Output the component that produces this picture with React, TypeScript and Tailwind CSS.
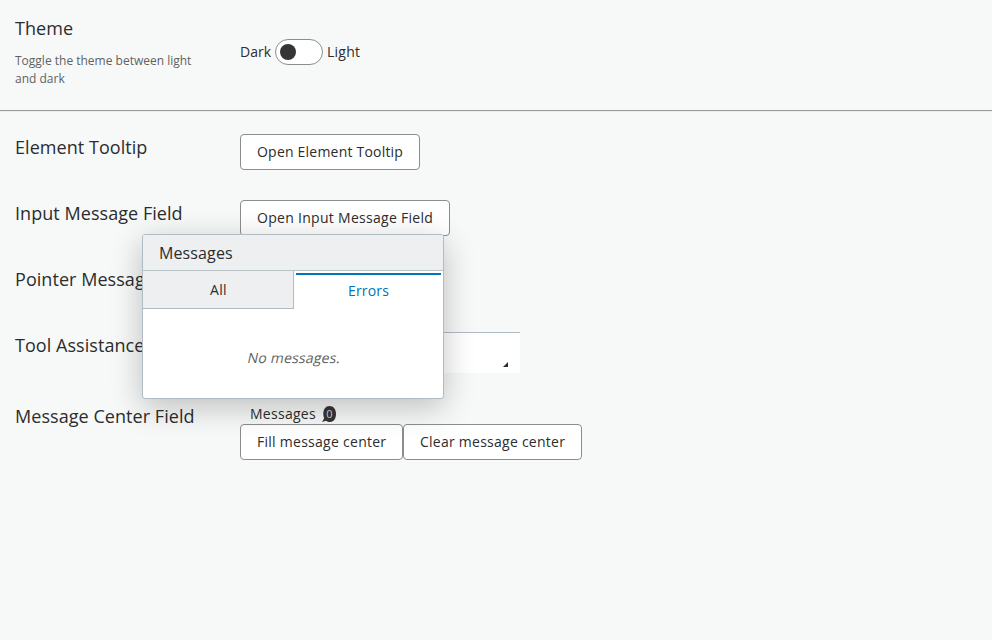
import type { ReactNode } from "react";

function Row({ title, description, children }: { title: string; description?: string; children?: ReactNode }) {
  return (
    <section className="flex p-[15px]">
      <div className="w-[225px] shrink-0 pr-[30px]">
        <h2 className="text-lg leading-[27px] tracking-[0.05px] whitespace-nowrap">{title}</h2>
        {description && <p className="mt-2.5 text-xs leading-[18px] text-[#606262]">{description}</p>}
      </div>
      {children}
    </section>
  );
}

function Button({ className, children }: { className: string; children: ReactNode }) {
  return (
    <button
      className={`flex h-9 justify-start rounded border border-[#8b8d8e] bg-white pt-1.5 pl-4 text-sm leading-[21px] whitespace-nowrap ${className}`}
    >
      {children}
    </button>
  );
}

function MessagesPopup() {
  return (
    <div className="absolute top-[234px] left-[142px] h-[165px] w-[302px] rounded-[3px] border border-[#b1bbc2] bg-white shadow-[0_8px_32px_rgba(0,0,0,0.24)]">
      <div className="h-9 rounded-t-[2px] border-b border-[#b9c3c8] bg-[#eeeff1] pl-4 text-base leading-9 tracking-[0.12px]">
        Messages
      </div>
      <div className="flex h-[38px] text-sm">
        <button className="w-[151px] border-r border-b border-[#b1bbc2] bg-[#eeeff1] pl-px tracking-[0.3px]">All</button>
        <div className="flex-1 px-0.5 pt-0.5">
          <div className="h-0.5 bg-[#0073ba]" />
          <button className="flex h-[34px] w-full justify-center pt-[5px] leading-[21px] tracking-[0.15px] text-[#0073ba]">
            Errors
          </button>
        </div>
      </div>
      <p className="mt-[38px] pl-0.5 text-center text-sm leading-[21px] text-[#606262]">
        <span className="inline-block -skew-x-12 tracking-[0.2px]">No messages.</span>
      </p>
    </div>
  );
}

export default function App() {
  return (
    <main className="relative h-[640px] overflow-hidden bg-[#f7f9f8] font-['Open_Sans',sans-serif] text-[#2b2d2e]">
      <Row title="Theme" description="Toggle the theme between light and dark">
        <div className="flex h-[73px] items-center gap-1 text-sm">
          <span>Dark</span>
          <span className="flex h-[26px] w-12 items-center rounded-full border border-[#8b8d8e] bg-white px-1">
            <span className="size-4 rounded-full bg-[#353535]" />
          </span>
          <span className="tracking-[0.25px]">Light</span>
        </div>
      </Row>
      <hr className="my-[7px] h-0.5 border-t border-b border-t-[#9a9c9c] border-b-[#eeeeee]" />
      <Row title="Element Tooltip">
        <Button className="w-[180px] tracking-[0.21px]">Open Element Tooltip</Button>
      </Row>
      <Row title="Input Message Field">
        <Button className="w-[210px] tracking-[0.29px]">Open Input Message Field</Button>
      </Row>
      <Row title="Pointer Message">
        <Button className="w-[180px] tracking-[0.2px]">Open Pointer Message</Button>
      </Row>
      <Row title="Tool Assistance">
        <div className="flex h-[41px] w-[280px] items-end justify-end border-t border-[#b1bbc2] bg-white pr-3 pb-1.5">
          <svg className="size-[5px]" viewBox="0 0 5 5" fill="#2b2d2e">
            <path d="M5 0V5H0Z" />
          </svg>
        </div>
      </Row>
      <Row title="Message Center Field">
        <div>
          <div className="flex h-[21px] items-center pl-2.5 text-sm">
            <span className="w-[66px] tracking-[0.27px]">Messages</span>
            <span className="relative ml-[5px] flex h-4 w-[15px] items-center justify-center">
              <svg className="absolute inset-0 size-full" viewBox="0 0 15 16" fill="#353535">
                <path d="M8.5 0C12.5 0 15 3 15 8S12.5 16 9 16C7.5 16 6 15.6 5 14.8L1 16L3.2 12.2C2.6 11 2.3 9.5 2.3 8C2.3 3 4.8 0 8.5 0Z" />
              </svg>
              <span className="relative left-px text-[11px] leading-4 text-[#d5d7d6]">0</span>
            </span>
          </div>
          <div className="flex">
            <Button className="w-[163px] tracking-[0.27px]">Fill message center</Button>
            <Button className="w-[179px] tracking-[0.25px]">Clear message center</Button>
          </div>
        </div>
      </Row>
      <MessagesPopup />
    </main>
  );
}
